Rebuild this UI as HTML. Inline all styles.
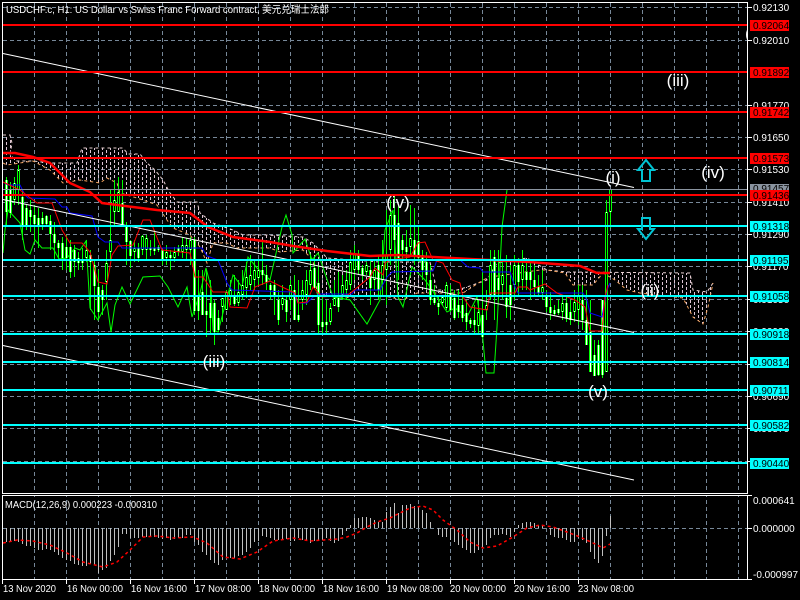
<!DOCTYPE html>
<html><head><meta charset="utf-8"><style>
html,body{margin:0;padding:0;background:#000;width:800px;height:600px;overflow:hidden}
svg{display:block}
text{font-family:"Liberation Sans","Noto Sans CJK SC",sans-serif;font-size:10px;fill:#fff}
.k text{fill:#000}
.w text{font-size:17px}
</style></head><body>
<svg width="800" height="600" viewBox="0 0 800 600" xmlns="http://www.w3.org/2000/svg" shape-rendering="crispEdges">
<defs>
<pattern id="h" patternUnits="userSpaceOnUse" x="2" width="8" height="10"><rect width="1" height="3" y="0" fill="#dcc4d4"/><rect width="1" height="3" y="5" fill="#dcc4d4"/><rect x="4" width="1" height="3" y="2" fill="#dcc4d4"/><rect x="4" width="1" height="3" y="7" fill="#dcc4d4"/></pattern>
<path id="b" d="M6 180V212M10 190V213M14 183V200M18 170V190M22 197V225M26 208V225M30 210V217M34 215V224M38 218V225M42 218V224M46 216V224M50 221V234M54 234V243M58 243V248M62 243V258M66 247V258M70 247V272M74 250V262M78 258V263M82 260V263M86 250V258M90 255V262M94 265V286M98 287V312M102 290V300M106 263V282M110 240V252M114 200V212M118 192V212M122 203V225M126 225V242M130 241V256M134 248V252M138 248V258M142 236V250M146 238V250M150 248V250M154 248V251M158 247V250M162 250V260M166 252V258M170 255V258M174 252V258M178 248V252M182 245V252M186 245V250M190 240V250M194 240V311M198 296V311M202 292V315M206 311V315M210 303V318M214 303V332M218 318V330M222 298V307M226 292V310M230 290V296M234 295V304M238 292V303M242 285V295M246 277V288M250 275V285M254 270V280M258 270V278M262 270V275M266 275V282M270 285V290M274 285V295M278 300V320M282 298V305M286 300V312M290 285V300M294 290V320M298 315V320M302 290V300M306 280V295M310 270V285M314 268V288M318 283V325M322 322V327M326 322V325M330 308V322M334 298V306M338 298V307M342 285V295M346 280V290M350 262V285M354 254V270M358 255V270M362 268V275M366 265V272M370 270V288M374 270V280M378 265V290M382 265V280M386 255V270M390 215V250M394 215V240M398 223V258M402 240V250M406 247V252M410 238V247M414 240V255M418 241V258M422 255V270M426 262V275M430 280V300M434 298V303M438 303V307M442 297V303M446 285V308M450 293V310M454 298V318M458 305V312M462 305V318M466 313V322M470 320V324M474 320V325M478 312V326M482 315V337M486 305V310M490 265V295M494 257V295M498 278V290M502 275V285M506 298V307M510 285V305M514 265V285M518 265V282M522 265V280M526 272V280M530 272V280M534 280V287M538 287V293M542 287V293M546 297V307M550 307V313M554 310V314M558 309V313M562 303V312M566 303V318M570 312V320M574 302V312M578 295V310M582 300V320M586 320V345M590 332V372M594 355V376M598 345V375M602 300V375M606 212V372M610 189V212"/>
</defs>
<rect width="800" height="600" fill="#000"/>

<!-- grid -->
<g stroke="#778899" stroke-width="1" stroke-dasharray="4 3" fill="none">
<path d="M3 7.500H747M3 40.500H747M3 72.500H747M3 105.500H747M3 137.500H747M3 169.500H747M3 202.500H747M3 234.500H747M3 266.500H747M3 299.500H747M3 331.500H747M3 364.500H747M3 396.500H747M3 428.500H747M3 461.500H747M3 528.500H747"/>
<path d="M34.500 3V579M66.500 3V579M98.500 3V579M130.500 3V579M162.500 3V579M194.500 3V579M226.500 3V579M258.500 3V579M290.500 3V579M322.500 3V579M354.500 3V579M386.500 3V579M418.500 3V579M450.500 3V579M482.500 3V579M514.500 3V579M546.500 3V579M578.500 3V579M610.500 3V579M642.500 3V579M674.500 3V579M706.500 3V579M738.500 3V579"/>
</g>
<rect x="3" y="494" width="744" height="1" fill="#000"/>

<!-- cloud -->
<polygon points="3,135 10,135 12,143 10,155 17,161 33,161 50,163 77,163 82,148 123,148 128,154 140,154 147,163 155,170 163,180 170,193 177,202 197,202 200,213 213,223 233,230 243,235 267,235 303,237 313,243 327,258 380,262 430,262 437,290 457,290 467,287 487,280 497,263 527,258 547,270 567,272 690,273 693,290 707,292 713,283 708,307 703,324 693,317 683,298 640,293 627,290 615,280 603,273 593,285 573,285 565,273 547,270 540,270 490,277 483,280 463,293 417,293 403,300 380,295 340,298 317,293 313,260 303,250 280,252 270,248 237,248 227,243 213,243 207,263 200,247 190,235 173,228 167,220 157,205 137,198 120,193 117,183 107,178 100,183 80,180 63,183 50,170 33,161 7,165 3,163" fill="url(#h)"/>
<g fill="none" stroke-width="1" stroke-dasharray="3 3" shape-rendering="auto">
<polyline stroke="#e8cfd0" points="3,135 10,135 12,143 10,155 17,161 33,161 50,163 77,163 82,148 123,148 128,154 140,154 147,163 155,170 163,180 170,193 177,202 197,202 200,213 213,223 233,230 243,235 267,235 303,237 313,243 327,258 380,262 430,262 437,290 457,290 467,287 487,280 497,263 527,258 547,270 567,272 690,273 693,290 707,292 713,283"/>
<polyline stroke="#f4a460" points="3,163 7,165 33,161 50,170 63,183 80,180 100,183 107,178 117,183 120,193 137,198 157,205 167,220 173,228 190,235 200,247 207,263 213,243 227,243 237,248 270,248 280,252 303,250 313,260 317,293 340,298 380,295 403,300 417,293 463,293 483,280 490,277 540,270 547,270 565,273 573,285 593,285 603,273 615,280 627,290 640,293 683,298 693,317 703,324 708,307 713,283"/>
</g>

<!-- chikou -->
<polyline fill="none" stroke="#00ff00" stroke-width="1" shape-rendering="auto" points="3,253 5,230 8,210 20,223 25,250 30,254 35,240 42,248 53,248 59,259 67,258 75,248 80,250 86,241 90,308 98,320 107,303 111,332 115,305 122,287 130,304 143,277 160,276 168,287 178,307 187,287 192,317 200,293 206,268 211,287 213,330 218,332 223,313 233,275 242,287 248,257 257,268 267,277 270,280 282,227 286,215 292,235 293,253 305,239 312,260 318,253 333,297 350,300 367,324 380,300 385,230 393,210 398,297 403,307 412,267 425,280 437,297 447,312 455,308 467,317 477,297 482,330 486,373 494,373 497,327 502,227 507,190"/>

<!-- candles -->
<g transform="translate(.5 0)" fill="none">
<path stroke="#00ff00" stroke-width="1" d="M6 177V225M10 182V218M14 177V205M18 165V205M22 190V240M26 205V230M30 200V232M34 205V240M38 208V248M42 212V230M46 215V226M50 215V250M54 222V260M58 240V258M62 237V270M66 235V270M70 240V278M74 245V277M78 252V270M82 248V270M86 240V262M90 250V310M94 260V320M98 270V320M102 285V315M106 250V300M110 190V260M114 180V225M118 177V210M122 180V226M126 222V265M130 240V268M134 240V262M138 243V262M142 235V255M146 235V260M150 240V256M154 230V255M158 245V252M162 250V265M166 245V265M170 250V270M174 247V262M178 245V256M182 237V258M186 238V260M190 237V265M194 237V315M198 270V320M202 270V315M206 270V337M210 280V333M214 300V345M218 310V332M222 298V322M226 290V310M230 280V305M234 275V306M238 280V306M242 270V300M246 262V298M250 255V290M254 260V290M258 260V285M262 240V285M266 265V290M270 283V300M274 280V315M278 290V325M282 285V310M286 295V322M290 280V310M294 275V320M298 280V322M302 280V310M306 270V305M310 255V290M314 258V288M318 265V335M322 295V335M326 300V335M330 303V325M334 280V305M338 272V312M342 275V300M346 270V300M350 250V290M354 245V280M358 250V275M362 265V280M366 262V275M370 260V305M374 260V290M378 255V300M382 240V295M386 210V305M390 200V265M394 195V260M398 205V280M402 235V260M406 230V260M410 205V255M414 208V265M418 225V262M422 250V280M426 252V290M430 265V305M434 285V305M438 295V315M442 295V305M446 282V310M450 285V312M454 290V320M458 290V318M462 297V322M466 300V330M470 318V328M474 305V333M478 300V335M482 270V338M486 290V320M490 250V300M494 250V320M498 250V300M502 260V300M506 255V318M510 265V320M514 255V300M518 258V295M522 250V290M526 262V290M530 262V300M534 265V295M538 275V295M542 270V300M546 290V312M550 292V320M554 305V316M558 300V315M562 295V320M566 295V322M570 300V325M574 290V322M578 285V325M582 285V330M586 290V345M590 300V372M594 340V376M598 340V376M602 300V378M606 200V372M610 189V228"/>
<use href="#b" stroke="#00ff00" stroke-width="3"/>
<use href="#b" stroke="#ffffff" stroke-width="1"/>
<path stroke="#000" stroke-width="1" d="M14 184V199M18 171V189M86 251V257M106 264V281M110 241V251M114 201V211M118 193V211M134 249V251M142 237V249M146 239V249M166 253V257M174 253V257M182 246V251M186 246V249M190 241V249M222 299V306M226 293V309M230 291V295M238 293V302M242 286V294M246 278V287M250 276V284M254 271V279M258 271V277M282 299V304M290 286V299M302 291V299M306 281V294M310 271V284M330 309V321M334 299V305M342 286V294M346 281V289M350 263V284M354 255V269M366 266V271M374 271V279M382 266V279M386 256V269M390 216V249M410 239V246M442 298V302M446 286V307M478 313V325M486 306V309M490 266V294M502 276V284M514 266V284M522 266V279M542 288V292M562 304V311M574 303V311M578 296V309M606 213V371M610 190V211"/>
</g>

<!-- indicators -->
<g fill="none" shape-rendering="auto">
<polyline stroke="#0000ff" stroke-width="1" points="3,182 8,185 20,185 25,195 28,198 55,199 62,207 67,207 70,213 92,216 98,237 105,242 118,242 122,248 202,248 207,256 218,260 227,283 232,290 293,292 298,303 307,303 313,297 320,294 352,294 355,290 380,290 387,277 392,272 433,271 437,260 460,260 468,267 480,268 483,272 510,272 515,287 518,293 583,293 587,300 590,313 602,317 607,290 610,283"/>
<polyline stroke="#ff0000" stroke-width="1" points="3,182 20,190 37,203 52,203 62,230 70,243 82,243 90,252 98,282 107,284 112,255 118,246 133,245 143,220 150,220 162,250 190,253 195,277 203,277 213,292 227,292 230,307 247,308 255,287 270,281 280,286 295,293 298,303 307,302 313,287 322,297 348,295 370,277 375,268 383,275 385,263 390,260 410,257 418,243 425,242 433,260 443,263 452,280 460,283 463,297 470,307 487,310 490,293 515,293 518,287 527,287 530,290 545,284 557,293 575,300 585,307 590,331 602,331 605,297 608,285"/>
<polyline stroke="#ff0000" stroke-width="2.500" points="3,153 15,153 33,157 50,163 70,183 90,192 102,203 133,207 157,210 190,213 208,227 233,237 270,242 293,246 327,251 370,256 397,255 470,259 530,262 580,266 597,273 610,273"/>
</g>

<!-- trend lines -->
<g stroke="#ffffff" stroke-width="1" fill="none" shape-rendering="auto">
<path d="M3 53.500L634 187.500M3 199.500L634 332.500M3 345.500L634 480"/>
</g>

<!-- level lines -->
<rect x="3" y="189" width="744" height="1" fill="#8a94a0"/>
<g fill="#ff0000">
<rect x="3" y="24" width="744" height="2"/><rect x="3" y="71" width="744" height="2"/><rect x="3" y="111" width="744" height="2"/><rect x="3" y="157" width="744" height="2"/><rect x="3" y="194" width="744" height="2"/>
</g>
<g fill="#00ffff">
<rect x="3" y="225" width="744" height="2"/><rect x="3" y="259" width="744" height="2"/><rect x="3" y="295" width="744" height="2"/><rect x="3" y="333" width="744" height="2"/><rect x="3" y="361" width="744" height="2"/><rect x="3" y="389" width="744" height="2"/><rect x="3" y="424" width="744" height="2"/><rect x="3" y="462" width="744" height="2"/>
</g>

<!-- arrows -->
<g fill="none" stroke="#00c4d4" stroke-width="2" shape-rendering="auto">
<path d="M646 160L654 170H650V181H642V170H638Z"/>
<path d="M642 218H650V229H654L646 239L638 229H642Z"/>
</g>

<!-- MACD -->
<path fill="none" stroke="#c0c0c0" stroke-width="1" transform="translate(.5 0)" d="M6 528V542M10 528V542M14 528V541M18 528V542M22 528V544M26 528V546M30 528V546M34 528V548M38 528V550M42 528V550M46 528V549M50 528V550M54 528V552M58 528V555M62 528V558M66 528V560M70 528V561M74 528V564M78 528V565M82 528V566M86 528V566M90 528V564M94 528V565M98 528V573M102 528V570M106 528V568M110 528V561M114 528V555M118 528V547M122 528V534M126 528V534M130 528V538M134 528V538M138 528V538M142 528V537M146 528V537M150 528V537M154 528V537M158 528V538M162 528V539M166 528V538M170 528V540M174 528V539M178 528V538M182 528V538M186 528V535M190 528V535M194 528V542M198 528V545M202 528V552M206 528V555M210 528V560M214 528V563M218 528V565M222 528V560M226 528V558M230 528V558M234 528V558M238 528V556M242 528V555M246 528V552M250 528V548M254 528V542M258 528V541M262 528V536M266 528V537M270 528V538M274 528V540M278 528V540M282 528V539M286 528V539M290 528V541M294 528V541M298 528V538M302 528V540M306 528V540M310 528V543M314 528V541M318 528V540M322 528V540M326 528V538M330 528V541M334 528V543M338 528V541M342 528V535M346 528V531M350 528V525M354 528V518M358 528V518M362 528V517M366 528V517M370 528V518M374 528V520M378 528V522M382 528V522M386 528V512M390 528V507M394 528V503M398 528V513M402 528V505M406 528V505M410 528V504M414 528V506M418 528V506M422 528V510M426 528V513M430 528V522M438 528V535M442 528V537M446 528V537M450 528V540M454 528V542M458 528V545M462 528V548M466 528V550M470 528V553M474 528V553M478 528V550M482 528V548M486 528V545M490 528V538M494 528V535M498 528V535M502 528V534M506 528V535M510 528V537M514 528V532M518 528V525M522 528V523M526 528V522M530 528V522M534 528V523M538 528V525M542 528V525M550 528V535M554 528V537M558 528V538M562 528V538M566 528V540M570 528V542M574 528V542M578 528V538M582 528V540M586 528V543M590 528V552M594 528V559M598 528V563M602 528V556M606 528V536M610 528V516"/>
<polyline fill="none" stroke="#ff0000" stroke-width="1.500" stroke-dasharray="3 3" shape-rendering="auto" points="3,543 17,540 33,541 50,545 67,553 83,562 103,567 117,562 130,550 143,537 157,536 173,538 193,537 207,543 223,557 240,559 257,552 273,541 293,538 310,541 337,539 347,537 357,533 367,527 377,522 390,518 400,513 410,508 423,506 433,510 443,520 457,530 470,542 483,548 497,546 513,537 527,528 540,525 553,527 567,532 580,537 593,543 603,548 610,544"/>

<!-- title -->
<text x="6" y="13" textLength="323" lengthAdjust="spacingAndGlyphs">USDCHF.c, H1:  US Dollar vs Swiss Franc Forward contract, 美元兑瑞士法郎</text>
<text x="5" y="508" textLength="152" lengthAdjust="spacingAndGlyphs">MACD(12,26,9) 0.000223 -0.000310</text>

<!-- wave labels -->
<g class="w" text-anchor="middle">
<text x="214" y="367">(iii)</text>
<text x="398" y="208">(iv)</text>
<text x="613" y="183">(i)</text>
<text x="650" y="296">(ii)</text>
<text x="598" y="397">(v)</text>
<text x="678" y="86">(iii)</text>
<text x="713" y="178">(iv)</text>
</g>
<text x="745" y="39" style="font-size:17px">(</text>
<rect x="748" y="3" width="52" height="491" fill="#000"/>

<!-- frames -->
<g fill="#fff">
<rect x="2" y="2" width="746" height="1"/>
<rect x="2" y="2" width="1" height="492"/>
<rect x="2" y="493" width="746" height="1"/>
<rect x="747" y="2" width="1" height="492"/>
<rect x="2" y="495" width="746" height="1"/>
<rect x="2" y="579" width="746" height="1"/>
<rect x="2" y="495" width="1" height="89"/>
<rect x="747" y="495" width="1" height="85"/>
<path d="M66 580h1v4h-1zM130 580h1v4h-1zM194 580h1v4h-1zM258 580h1v4h-1zM322 580h1v4h-1zM386 580h1v4h-1zM450 580h1v4h-1zM514 580h1v4h-1zM578 580h1v4h-1z"/>
<path d="M748 7h4v1h-4zM748 40h4v1h-4zM748 105h4v1h-4zM748 137h4v1h-4zM748 169h4v1h-4zM748 202h4v1h-4zM748 234h4v1h-4zM748 266h4v1h-4zM748 299h4v1h-4zM748 331h4v1h-4zM748 364h4v1h-4zM748 396h4v1h-4zM748 428h4v1h-4zM748 461h4v1h-4zM748 495h4v1h-4zM748 528h4v1h-4zM748 579h4v1h-4z"/>
</g>

<!-- axis labels -->
<g>
<text x="753" y="11">0.92130</text>
<text x="753" y="44">0.92010</text>
<text x="753" y="109">0.91770</text>
<text x="753" y="141">0.91650</text>
<text x="753" y="173">0.91530</text>
<text x="753" y="206">0.91410</text>
<text x="753" y="238">0.91290</text>
<text x="753" y="270">0.91170</text>
<text x="753" y="303">0.91050</text>
<text x="753" y="335">0.90930</text>
<text x="753" y="368">0.90810</text>
<text x="753" y="400">0.90690</text>
<text x="753" y="432">0.90570</text>
<text x="753" y="465">0.90450</text>
<text x="753" y="504">0.000641</text>
<text x="753" y="532">0.000000</text>
<text x="753" y="578">-0.000997</text>
</g>
<rect x="750" y="184" width="39" height="8" fill="#8a94a0"/>
<g class="k">
<text x="753" y="192">0.91457</text>
</g>
<g fill="#ff0000">
<rect x="750" y="20" width="39" height="11"/><rect x="750" y="67" width="39" height="11"/><rect x="750" y="107" width="39" height="11"/><rect x="750" y="153" width="39" height="11"/><rect x="750" y="190" width="39" height="11"/>
</g>
<g fill="#00ffff">
<rect x="750" y="221" width="39" height="11"/><rect x="750" y="255" width="39" height="11"/><rect x="750" y="291" width="39" height="11"/><rect x="750" y="329" width="39" height="11"/><rect x="750" y="357" width="39" height="11"/><rect x="750" y="385" width="39" height="11"/><rect x="750" y="420" width="39" height="11"/><rect x="750" y="458" width="39" height="11"/>
</g>
<g class="k">
<text x="753" y="29">0.92064</text>
<text x="753" y="76">0.91892</text>
<text x="753" y="116">0.91742</text>
<text x="753" y="162">0.91573</text>
<text x="753" y="199">0.91436</text>
<text x="753" y="230">0.91318</text>
<text x="753" y="264">0.91195</text>
<text x="753" y="300">0.91058</text>
<text x="753" y="338">0.90918</text>
<text x="753" y="366">0.90814</text>
<text x="753" y="394">0.90711</text>
<text x="753" y="429">0.90582</text>
<text x="753" y="467">0.90440</text>
</g>

<!-- time labels -->
<g>
<text x="3" y="592" textLength="53" lengthAdjust="spacingAndGlyphs">13 Nov 2020</text>
<text x="67" y="592" textLength="56" lengthAdjust="spacingAndGlyphs">16 Nov 00:00</text>
<text x="131" y="592" textLength="56" lengthAdjust="spacingAndGlyphs">16 Nov 16:00</text>
<text x="195" y="592" textLength="56" lengthAdjust="spacingAndGlyphs">17 Nov 08:00</text>
<text x="259" y="592" textLength="56" lengthAdjust="spacingAndGlyphs">18 Nov 00:00</text>
<text x="323" y="592" textLength="56" lengthAdjust="spacingAndGlyphs">18 Nov 16:00</text>
<text x="387" y="592" textLength="56" lengthAdjust="spacingAndGlyphs">19 Nov 08:00</text>
<text x="450" y="592" textLength="56" lengthAdjust="spacingAndGlyphs">20 Nov 00:00</text>
<text x="514" y="592" textLength="56" lengthAdjust="spacingAndGlyphs">20 Nov 16:00</text>
<text x="578" y="592" textLength="56" lengthAdjust="spacingAndGlyphs">23 Nov 08:00</text>
</g>
</svg>
</body></html>
